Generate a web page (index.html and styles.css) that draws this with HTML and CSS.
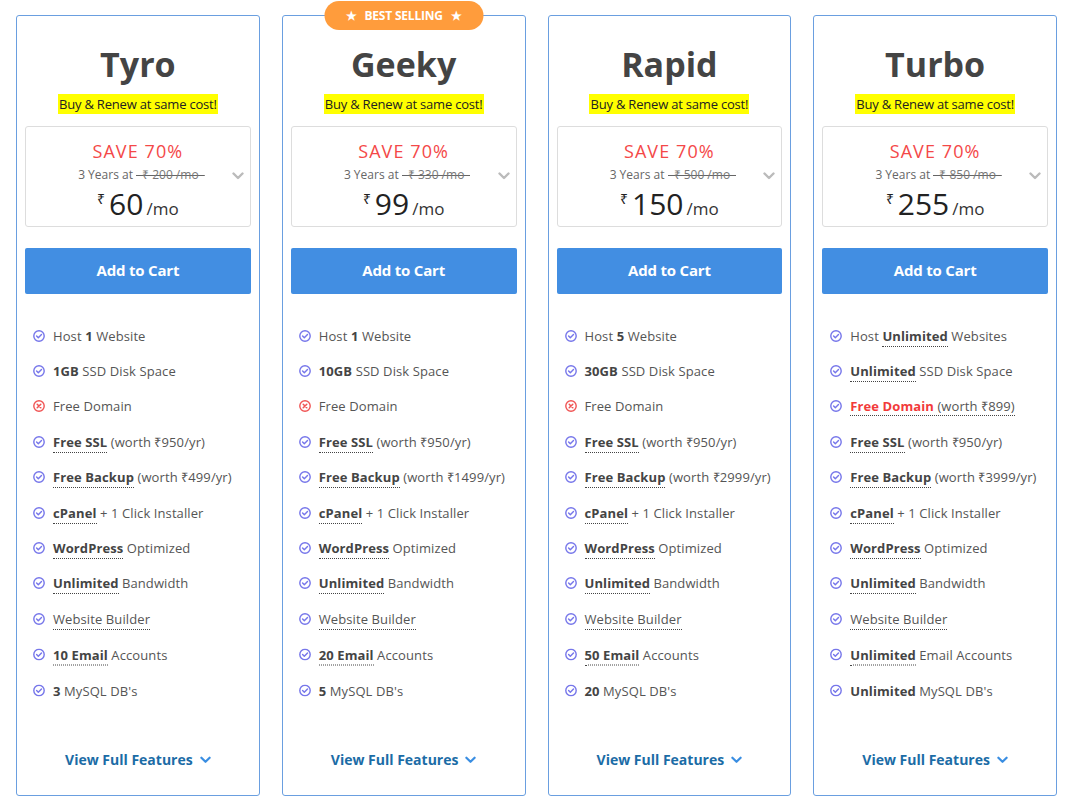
FILE: index.html
```html
<!DOCTYPE html>
<html lang="en">
<head>
<meta charset="utf-8">
<title>Hosting Plans</title>
<link rel="stylesheet" href="styles.css">
</head>
<body>
<svg width="0" height="0" class="defs">
  <defs>
    <symbol id="ok" viewBox="0 0 12 12">
      <circle cx="6" cy="6" r="5.2" fill="none" stroke="currentColor" stroke-width="1.4"/>
      <path d="M3.6 6.1 L5.3 7.8 L8.5 4.4" fill="none" stroke="currentColor" stroke-width="1.4" stroke-linecap="round" stroke-linejoin="round"/>
    </symbol>
    <symbol id="no" viewBox="0 0 12 12">
      <circle cx="6" cy="6" r="5.2" fill="none" stroke="currentColor" stroke-width="1.4"/>
      <path d="M4.2 4.2 L7.8 7.8 M7.8 4.2 L4.2 7.8" fill="none" stroke="currentColor" stroke-width="1.5" stroke-linecap="round"/>
    </symbol>
    <symbol id="chev" viewBox="0 0 12 8">
      <path d="M1.5 1.5 L6 6 L10.5 1.5" fill="none" stroke="currentColor" stroke-width="2.4" stroke-linecap="round" stroke-linejoin="round"/>
    </symbol>
  </defs>
</svg>
<main class="plans">

  <section class="card">
    <h2 class="name">Tyro</h2>
    <p class="promo"><span>Buy &amp; Renew at same cost!</span></p>
    <div class="pricebox">
      <div class="save">SAVE 70%</div>
      <div class="term">3 Years at <span class="old">₹ 200 /mo</span></div>
      <div class="price"><span class="cur">₹</span><span class="amt">60</span><span class="per">/mo</span></div>
      <svg class="pchev"><use href="#chev"/></svg>
    </div>
    <a class="cart">Add to Cart</a>
    <ul class="features">
      <li><svg class="ic ok"><use href="#ok"/></svg><span>Host <b class="plain">1</b> Website</span></li>
      <li><svg class="ic ok"><use href="#ok"/></svg><span><b class="plain">1GB</b> SSD Disk Space</span></li>
      <li><svg class="ic no"><use href="#no"/></svg><span>Free Domain</span></li>
      <li><svg class="ic ok"><use href="#ok"/></svg><span><b>Free SSL</b> (worth ₹950/yr)</span></li>
      <li><svg class="ic ok"><use href="#ok"/></svg><span><b>Free Backup</b> (worth ₹499/yr)</span></li>
      <li><svg class="ic ok"><use href="#ok"/></svg><span><b>cPanel</b> + 1 Click Installer</span></li>
      <li><svg class="ic ok"><use href="#ok"/></svg><span><b>WordPress</b> Optimized</span></li>
      <li><svg class="ic ok"><use href="#ok"/></svg><span><b>Unlimited</b> Bandwidth</span></li>
      <li><svg class="ic ok"><use href="#ok"/></svg><span><i class="dot">Website Builder</i></span></li>
      <li><svg class="ic ok"><use href="#ok"/></svg><span><b>10 Email</b> Accounts</span></li>
      <li><svg class="ic ok"><use href="#ok"/></svg><span><b class="plain">3</b> MySQL DB's</span></li>
    </ul>
    <a class="more">View Full Features <svg class="mchev"><use href="#chev"/></svg></a>
  </section>

  <section class="card">
    <div class="badge">★ <span>BEST SELLING</span> ★</div>
    <h2 class="name">Geeky</h2>
    <p class="promo"><span>Buy &amp; Renew at same cost!</span></p>
    <div class="pricebox">
      <div class="save">SAVE 70%</div>
      <div class="term">3 Years at <span class="old">₹ 330 /mo</span></div>
      <div class="price"><span class="cur">₹</span><span class="amt">99</span><span class="per">/mo</span></div>
      <svg class="pchev"><use href="#chev"/></svg>
    </div>
    <a class="cart">Add to Cart</a>
    <ul class="features">
      <li><svg class="ic ok"><use href="#ok"/></svg><span>Host <b class="plain">1</b> Website</span></li>
      <li><svg class="ic ok"><use href="#ok"/></svg><span><b class="plain">10GB</b> SSD Disk Space</span></li>
      <li><svg class="ic no"><use href="#no"/></svg><span>Free Domain</span></li>
      <li><svg class="ic ok"><use href="#ok"/></svg><span><b>Free SSL</b> (worth ₹950/yr)</span></li>
      <li><svg class="ic ok"><use href="#ok"/></svg><span><b>Free Backup</b> (worth ₹1499/yr)</span></li>
      <li><svg class="ic ok"><use href="#ok"/></svg><span><b>cPanel</b> + 1 Click Installer</span></li>
      <li><svg class="ic ok"><use href="#ok"/></svg><span><b>WordPress</b> Optimized</span></li>
      <li><svg class="ic ok"><use href="#ok"/></svg><span><b>Unlimited</b> Bandwidth</span></li>
      <li><svg class="ic ok"><use href="#ok"/></svg><span><i class="dot">Website Builder</i></span></li>
      <li><svg class="ic ok"><use href="#ok"/></svg><span><b>20 Email</b> Accounts</span></li>
      <li><svg class="ic ok"><use href="#ok"/></svg><span><b class="plain">5</b> MySQL DB's</span></li>
    </ul>
    <a class="more">View Full Features <svg class="mchev"><use href="#chev"/></svg></a>
  </section>

  <section class="card">
    <h2 class="name">Rapid</h2>
    <p class="promo"><span>Buy &amp; Renew at same cost!</span></p>
    <div class="pricebox">
      <div class="save">SAVE 70%</div>
      <div class="term">3 Years at <span class="old">₹ 500 /mo</span></div>
      <div class="price"><span class="cur">₹</span><span class="amt">150</span><span class="per">/mo</span></div>
      <svg class="pchev"><use href="#chev"/></svg>
    </div>
    <a class="cart">Add to Cart</a>
    <ul class="features">
      <li><svg class="ic ok"><use href="#ok"/></svg><span>Host <b class="plain">5</b> Website</span></li>
      <li><svg class="ic ok"><use href="#ok"/></svg><span><b class="plain">30GB</b> SSD Disk Space</span></li>
      <li><svg class="ic no"><use href="#no"/></svg><span>Free Domain</span></li>
      <li><svg class="ic ok"><use href="#ok"/></svg><span><b>Free SSL</b> (worth ₹950/yr)</span></li>
      <li><svg class="ic ok"><use href="#ok"/></svg><span><b>Free Backup</b> (worth ₹2999/yr)</span></li>
      <li><svg class="ic ok"><use href="#ok"/></svg><span><b>cPanel</b> + 1 Click Installer</span></li>
      <li><svg class="ic ok"><use href="#ok"/></svg><span><b>WordPress</b> Optimized</span></li>
      <li><svg class="ic ok"><use href="#ok"/></svg><span><b>Unlimited</b> Bandwidth</span></li>
      <li><svg class="ic ok"><use href="#ok"/></svg><span><i class="dot">Website Builder</i></span></li>
      <li><svg class="ic ok"><use href="#ok"/></svg><span><b>50 Email</b> Accounts</span></li>
      <li><svg class="ic ok"><use href="#ok"/></svg><span><b class="plain">20</b> MySQL DB's</span></li>
    </ul>
    <a class="more">View Full Features <svg class="mchev"><use href="#chev"/></svg></a>
  </section>

  <section class="card">
    <h2 class="name">Turbo</h2>
    <p class="promo"><span>Buy &amp; Renew at same cost!</span></p>
    <div class="pricebox">
      <div class="save">SAVE 70%</div>
      <div class="term">3 Years at <span class="old">₹ 850 /mo</span></div>
      <div class="price"><span class="cur">₹</span><span class="amt">255</span><span class="per">/mo</span></div>
      <svg class="pchev"><use href="#chev"/></svg>
    </div>
    <a class="cart">Add to Cart</a>
    <ul class="features">
      <li><svg class="ic ok"><use href="#ok"/></svg><span>Host <b>Unlimited</b> Websites</span></li>
      <li><svg class="ic ok"><use href="#ok"/></svg><span><b>Unlimited</b> SSD Disk Space</span></li>
      <li><svg class="ic ok"><use href="#ok"/></svg><span class="dotwrap"><b class="red">Free Domain</b> (worth ₹899)</span></li>
      <li><svg class="ic ok"><use href="#ok"/></svg><span><b>Free SSL</b> (worth ₹950/yr)</span></li>
      <li><svg class="ic ok"><use href="#ok"/></svg><span><b>Free Backup</b> (worth ₹3999/yr)</span></li>
      <li><svg class="ic ok"><use href="#ok"/></svg><span><b>cPanel</b> + 1 Click Installer</span></li>
      <li><svg class="ic ok"><use href="#ok"/></svg><span><b>WordPress</b> Optimized</span></li>
      <li><svg class="ic ok"><use href="#ok"/></svg><span><b>Unlimited</b> Bandwidth</span></li>
      <li><svg class="ic ok"><use href="#ok"/></svg><span><i class="dot">Website Builder</i></span></li>
      <li><svg class="ic ok"><use href="#ok"/></svg><span><b>Unlimited</b> Email Accounts</span></li>
      <li><svg class="ic ok"><use href="#ok"/></svg><span><b class="plain">Unlimited</b> MySQL DB's</span></li>
    </ul>
    <a class="more">View Full Features <svg class="mchev"><use href="#chev"/></svg></a>
  </section>

</main>
</body>
</html>
```

FILE: styles.css
```css
* { box-sizing: border-box; }

html, body {
  margin: 0;
  padding: 0;
  background: #ffffff;
}

body {
  font-family: "Open Sans", "Liberation Sans", Arial, sans-serif;
  color: #555555;
}

.defs {
  width: 0;
  height: 0;
  display: block;
  overflow: hidden;
}

.plans {
  display: grid;
  grid-template-columns: repeat(4, 1fr);
  column-gap: 22px;
  padding: 15px 11px 6px 16px;
}

.card {
  position: relative;
  display: flex;
  flex-direction: column;
  border: 1px solid #6a9fe0;
  border-radius: 3px;
  padding: 27px 8px 0 8px;
  background: #fff;
}

.badge {
  position: absolute;
  top: -15px;
  left: 50%;
  transform: translateX(-50%);
  width: 159px;
  height: 29px;
  border-radius: 15px;
  background: #ff9c3c;
  color: #fff;
  font-size: 12px;
  font-weight: 700;
  display: flex;
  align-items: center;
  justify-content: center;
  gap: 7px;
  letter-spacing: -0.2px;
}
.badge span { padding: 0 1px; }

.name {
  margin: 0;
  text-align: center;
  font-size: 34px;
  line-height: 43px;
  font-weight: 700;
  color: #444444;
  letter-spacing: 0;
}

.promo {
  margin: 9px 0 0;
  text-align: center;
  font-size: 13px;
  line-height: 18px;
  letter-spacing: -0.2px;
}
.promo span {
  background: #ffff00;
  color: #222;
  padding: 1px 1px;
}

.pricebox {
  position: relative;
  margin-top: 13px;
  height: 101px;
  border: 1px solid #dddddd;
  border-radius: 3px;
  text-align: center;
  padding-top: 12px;
}

.save {
  font-size: 18px;
  line-height: 24px;
  font-weight: 500;
  color: #f44848;
  letter-spacing: 1.1px;
}

.term {
  font-size: 12px;
  line-height: 18px;
  margin-top: 3px;
  padding-left: 7px;
  color: #666;
  letter-spacing: 0;
}
.old {
  padding: 0 6px;
  color: #777;
  background: linear-gradient(#666, #666) center 55% / 100% 1px no-repeat;
}

.price {
  display: flex;
  justify-content: center;
  align-items: baseline;
  margin-top: 0;
  color: #222;
}
.cur {
  font-size: 14px;
  align-self: flex-start;
  margin-top: 5px;
  margin-right: 4px;
}
.amt {
  font-size: 30px;
  line-height: 40px;
  font-weight: 400;
}
.per {
  font-size: 17px;
  color: #333;
  margin-left: 3px;
}

.pchev {
  position: absolute;
  right: 6px;
  top: 45px;
  width: 12px;
  height: 8px;
  color: #bbbbbb;
}

.cart {
  display: block;
  margin-top: 21px;
  height: 46px;
  line-height: 45px;
  border-radius: 2px;
  background: #428ee2;
  color: #ffffff;
  text-align: center;
  font-size: 15px;
  font-weight: 700;
  letter-spacing: -0.2px;
}

.features {
  list-style: none;
  margin: 24px 0 0;
  padding: 0 0 0 8px;
}
.features li {
  display: flex;
  align-items: center;
  height: 35.4px;
  font-size: 13px;
  color: #555;
  letter-spacing: 0.1px;
  white-space: nowrap;
}
.features li:nth-child(n+10) { transform: translateY(0.5px); }

.ic {
  flex: none;
  width: 12px;
  height: 12px;
  margin-right: 8px;
}
.ic.ok { color: #7676ea; }
.ic.no { color: #f05454; }

.features b {
  font-weight: 700;
  color: #444;
  border-bottom: 1px dotted #444;
  padding-bottom: 1px;
}
.features b.plain {
  border-bottom: none;
  padding-bottom: 0;
}
.features b.red { color: #f23a3a; }
.features .dotwrap {
  border-bottom: 1px dotted #444;
}
.features .dotwrap b { border-bottom: none; }
.features i.dot {
  font-style: normal;
  border-bottom: 1px dotted #444;
  padding-bottom: 1px;
}

.more {
  display: flex;
  align-items: center;
  justify-content: center;
  margin-top: auto;
  padding-top: 43px;
  padding-bottom: 25px;
  line-height: 20px;
  font-size: 14px;
  font-weight: 700;
  color: #1b6ca6;
  letter-spacing: 0;
}
.mchev {
  width: 11px;
  height: 8px;
  margin-left: 7px;
  color: #3a8ee2;
}
```
